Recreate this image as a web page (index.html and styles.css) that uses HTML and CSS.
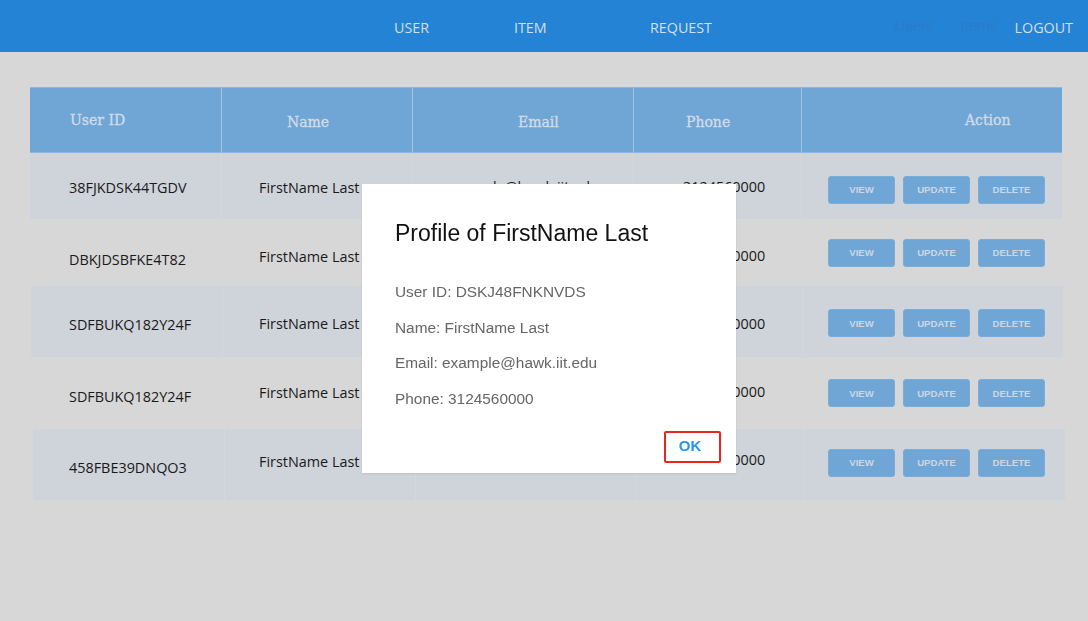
FILE: index.html
```html
<!DOCTYPE html>
<html>
<head>
<meta charset="utf-8">
<link rel="stylesheet" href="styles.css">
</head>
<body>
<header class="topbar">
  <nav class="main-nav">
    <a class="nav-link nav-user">USER</a>
    <a class="nav-link nav-item">ITEM</a>
    <a class="nav-link nav-request">REQUEST</a>
  </nav>
  <div class="side-nav">
    <span class="ghost-link">Users</span>
    <span class="ghost-link">Items</span>
    <a class="nav-link logout">LOGOUT</a>
  </div>
</header>

<main class="content">
  <div class="table">
    <div class="row head">
      <div class="cell c-id">User ID</div>
      <div class="cell c-name">Name</div>
      <div class="cell c-email">Email</div>
      <div class="cell c-phone">Phone</div>
      <div class="cell c-action">Action</div>
    </div>
    <div class="row striped r1">
      <div class="cell c-id">38FJKDSK44TGDV</div>
      <div class="cell c-name">FirstName Last</div>
      <div class="cell c-email">example@hawk.iit.edu</div>
      <div class="cell c-phone">3124560000</div>
      <div class="cell c-action"><span class="btn">VIEW</span><span class="btn">UPDATE</span><span class="btn">DELETE</span></div>
    </div>
    <div class="row r2">
      <div class="cell c-id">DBKJDSBFKE4T82</div>
      <div class="cell c-name">FirstName Last</div>
      <div class="cell c-email">example@hawk.iit.edu</div>
      <div class="cell c-phone">3124560000</div>
      <div class="cell c-action"><span class="btn">VIEW</span><span class="btn">UPDATE</span><span class="btn">DELETE</span></div>
    </div>
    <div class="row striped r3">
      <div class="cell c-id">SDFBUKQ182Y24F</div>
      <div class="cell c-name">FirstName Last</div>
      <div class="cell c-email">example@hawk.iit.edu</div>
      <div class="cell c-phone">3124560000</div>
      <div class="cell c-action"><span class="btn">VIEW</span><span class="btn">UPDATE</span><span class="btn">DELETE</span></div>
    </div>
    <div class="row r4">
      <div class="cell c-id">SDFBUKQ182Y24F</div>
      <div class="cell c-name">FirstName Last</div>
      <div class="cell c-email">example@hawk.iit.edu</div>
      <div class="cell c-phone">3124560000</div>
      <div class="cell c-action"><span class="btn">VIEW</span><span class="btn">UPDATE</span><span class="btn">DELETE</span></div>
    </div>
    <div class="row striped r5">
      <div class="cell c-id">458FBE39DNQO3</div>
      <div class="cell c-name">FirstName Last</div>
      <div class="cell c-email">example@hawk.iit.edu</div>
      <div class="cell c-phone">3124560000</div>
      <div class="cell c-action"><span class="btn">VIEW</span><span class="btn">UPDATE</span><span class="btn">DELETE</span></div>
    </div>
  </div>
</main>

<div class="backdrop"></div>
<div class="dialog">
  <h2 class="dialog-title">Profile of FirstName Last</h2>
  <div class="dialog-body">
    <p>User ID: DSKJ48FNKNVDS</p>
    <p>Name: FirstName Last</p>
    <p>Email: example@hawk.iit.edu</p>
    <p>Phone: 3124560000</p>
  </div>
  <div class="dialog-actions">
    <button class="ok-btn">OK</button>
  </div>
</div>
</body>
</html>
```

FILE: styles.css
```css
* { box-sizing: border-box; }

html, body {
  margin: 0;
  padding: 0;
  background: #d7d7d7;
  width: 1088px;
  height: 621px;
  overflow: hidden;
}

body {
  font-family: "Open Sans", "Noto Sans", sans-serif;
  color: #1a1a1a;
}

.topbar {
  height: 52px;
  background: #2483d5;
  display: flex;
  align-items: center;
  position: relative;
}

.main-nav {
  display: flex;
  padding-left: 394px;
  padding-top: 2px;
}

.nav-link {
  color: #d4dfea;
  font-size: 14.3px;
  text-decoration: none;
}

.nav-user { width: 120px; }
.nav-item { width: 136px; }

.side-nav {
  margin-left: auto;
  display: flex;
  align-items: center;
  padding-right: 15px;
}

.ghost-link {
  font-family: "Liberation Sans", Arial, sans-serif;
  font-size: 15px;
  color: #2a7cca;
  padding-bottom: 2px;
  width: 66px;
}
.ghost-link + .ghost-link { width: 54px; }

.logout {
  padding-top: 2px;
}

.content {
  padding: 35px 26px 0 30px;
}

.table {
  width: 1032px;
}

.row {
  display: flex;
  width: 1032px;
}

.cell {
  display: flex;
  flex-shrink: 0;
  align-items: center;
  font-size: 14.4px;
  border-right: 1px solid #d4d8de;
}
.cell:last-child { border-right: none; }

.c-id { width: 192px; padding-left: 39px; }
.c-name { width: 191px; padding-left: 37px; }
.c-email { width: 221px; justify-content: center; }
.c-phone { width: 168px; padding-left: 49px; }
.c-action { width: 260px; padding-left: 26px; gap: 8px; }

.head {
  height: 66px;
  background: #6fa6d6;
  border-top: 1px solid #8fb8de;
  border-bottom: 1px solid #8fb8de;
}
.head .cell {
  font-family: "DejaVu Serif", Georgia, serif;
  font-size: 14px;
  color: #d3dce6;
  border-right: 1px solid #a6c5e1;
  padding-top: 4px;
  -webkit-text-stroke: 0.3px #d3dce6;
}
.head .cell:last-child { border-right: none; }
.head .c-id { padding-left: 40px; padding-top: 0; }
.head .c-name { padding-left: 65px; }
.head .c-email { justify-content: flex-start; padding-left: 105px; }
.head .c-phone { padding-left: 52px; }
.head .c-action { padding-left: 163px; padding-top: 0; }

.striped { background: #cfd3da; }
.r1 { height: 66px; }
.r2 { height: 67px; }
.r3 { height: 71px; margin-left: 1px; }
.r4 { height: 72px; }
.r5 { height: 71px; margin-left: 3px; }

.r1 .c-id, .r1 .c-name { padding-top: 3px; }
.r2 .c-id { padding-top: 14px; }
.r2 .c-name { padding-top: 7px; }
.r2 .c-phone { padding-top: 5px; }
.r3 .c-id { padding-top: 6px; padding-left: 38px; }
.r3 .c-name { padding-top: 4px; padding-left: 36px; }
.r3 .c-phone { padding-top: 4px; padding-left: 48px; }
.r3 .c-action { padding-left: 25px; }
.r4 .c-id { padding-top: 6px; }
.r4 .c-name { padding-bottom: 2px; }
.r4 .c-phone { padding-bottom: 4px; }
.r5 .c-id { padding-top: 6px; padding-left: 36px; }
.r5 .c-name { padding-bottom: 6px; padding-left: 34px; }
.r5 .c-email { padding-bottom: 12px; }
.r5 .c-phone { padding-bottom: 10px; padding-left: 46px; }
.r5 .c-action { padding-left: 23px; }

.btn {
  display: inline-flex;
  align-items: center;
  justify-content: center;
  width: 67px;
  height: 28px;
  background: #6fa6d6;
  border: 1px solid #79acd8;
  border-radius: 3px;
  color: #cdd7e2;
  font-family: "Liberation Sans", Arial, sans-serif;
  font-weight: bold;
  font-size: 9.6px;
}
.r1 .btn { margin-top: 7px; }
.r3 .btn { margin-top: 3px; }
.r5 .btn { margin-top: -4px; }

.backdrop {
  position: fixed;
  inset: 0;
  background: transparent;
}

.dialog {
  position: absolute;
  left: 362px;
  top: 184px;
  width: 374px;
  height: 289px;
  background: #ffffff;
  font-family: "Liberation Sans", Arial, sans-serif;
  box-shadow: 0 1px 2px rgba(0,0,0,0.08);
  display: flex;
  flex-direction: column;
  padding: 0 15px 10px 33px;
}

.dialog-title {
  margin: 34px 0 0 0;
  font-size: 23px;
  font-weight: normal;
  color: #111111;
  line-height: 30px;
}

.dialog-body {
  margin-top: 35px;
  display: flex;
  flex-direction: column;
  gap: 17.5px;
}
.dialog-body p {
  margin: 0;
  font-size: 15.4px;
  line-height: 18px;
  color: #666666;
}

.dialog-actions {
  margin-top: auto;
  display: flex;
  justify-content: flex-end;
}

.ok-btn {
  width: 57px;
  height: 32px;
  border: 2px solid #e8251f;
  border-radius: 2px;
  background: #ffffff;
  color: #2196f3;
  font-family: "Liberation Sans", Arial, sans-serif;
  font-weight: bold;
  font-size: 15px;
  padding: 0 5px 3px 0;
}
```
